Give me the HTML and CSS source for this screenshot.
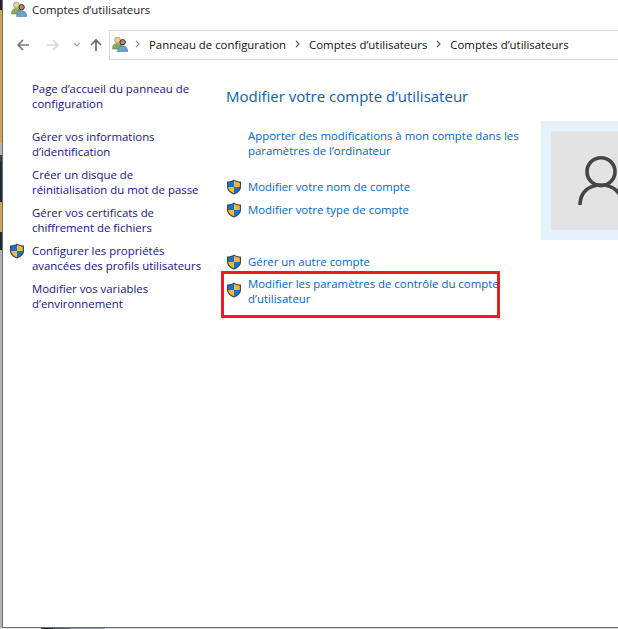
FILE: index.html
```html
<!DOCTYPE html>
<html lang="fr">
<head>
<meta charset="utf-8">
<title>Comptes d'utilisateurs</title>
<link rel="stylesheet" href="styles.css">
</head>
<body>
<svg class="defs" width="0" height="0" aria-hidden="true">
  <defs>
    <symbol id="shield" viewBox="0 0 16 16">
      <path d="M8 .4 C6 1.9 3.6 2.5 1 2.5 L1 8 C1 11.5 4.2 14 8 15.6 C11.8 14 15 11.5 15 8 L15 2.5 C12.4 2.5 10 1.9 8 .4Z" fill="#3d4650"/>
      <path d="M8 1.8 C6.2 3 4.2 3.6 2.2 3.7 L2.2 8 L8 8Z" fill="#1473d6"/>
      <path d="M8 1.8 C9.8 3 11.8 3.6 13.8 3.7 L13.8 8 L8 8Z" fill="#f7b733"/>
      <path d="M2.2 8 L8 8 L8 14.3 C5 13 2.3 11 2.2 8Z" fill="#f7b733"/>
      <path d="M13.8 8 L8 8 L8 14.3 C11 13 13.7 11 13.8 8Z" fill="#1473d6"/>
    </symbol>
    <symbol id="users" viewBox="0 0 16 16">
      <circle cx="5.4" cy="4" r="2.9" fill="#e8cfa0" stroke="#9aa36a" stroke-width=".8"/>
      <path d="M.6 12.5 C.6 8.6 2.6 7.4 5.4 7.4 C8 7.4 9.4 8.4 9.8 11 L8 13 L.6 13Z" fill="#8cab58" stroke="#6b8443" stroke-width=".6"/>
      <circle cx="10.6" cy="6.2" r="2.7" fill="#c08a5e" stroke="#3c2c22" stroke-width="1"/>
      <path d="M5.6 15.6 C5.6 11.6 7.6 9.8 10.6 9.8 C13.6 9.8 15.6 11.6 15.6 15.6Z" fill="#6ba3cf" stroke="#41729a" stroke-width=".6"/>
    </symbol>
  </defs>
</svg>
<div class="edge"></div>
<div class="window">
  <div class="titlebar">
    <svg class="icon-16"><use href="#users"/></svg>
    <span class="title">Comptes d’utilisateurs</span>
  </div>
  <div class="navbar">
    <div class="nav-buttons">
      <svg class="nav-arrow" viewBox="0 0 14 14"><path d="M14 7H3M8 2 3 7l5 5" fill="none" stroke="#7a7a7a" stroke-width="1.7"/></svg>
      <svg class="nav-arrow nav-forward" viewBox="0 0 14 14"><path d="M1 7h11M7 2l5 5-5 5" fill="none" stroke="#d6d6d6" stroke-width="1.7"/></svg>
      <svg class="nav-chevron" viewBox="0 0 8 5"><path d="M1 1l3 3 3-3" fill="none" stroke="#a8a8a8" stroke-width="1.1"/></svg>
      <svg class="nav-arrow nav-up" viewBox="0 0 14 14"><path d="M7 13V2M2 7l5-5 5 5" fill="none" stroke="#6a6a6a" stroke-width="1.7"/></svg>
    </div>
    <div class="address">
      <svg class="icon-16"><use href="#users"/></svg>
      <svg class="crumb-sep crumb-sep-first" viewBox="0 0 5 8"><path d="M1 1l3 3-3 3" fill="none" stroke="#8a8a8a" stroke-width="1.1"/></svg>
      <span>Panneau de configuration</span>
      <svg class="crumb-sep" viewBox="0 0 5 8"><path d="M1 1l3 3-3 3" fill="none" stroke="#555" stroke-width="1.1"/></svg>
      <span>Comptes d’utilisateurs</span>
      <svg class="crumb-sep" viewBox="0 0 5 8"><path d="M1 1l3 3-3 3" fill="none" stroke="#555" stroke-width="1.1"/></svg>
      <span>Comptes d’utilisateurs</span>
    </div>
  </div>
  <div class="content">
    <nav class="sidebar">
      <a class="side-link side-home">Page d’accueil du panneau de configuration</a>
      <a class="side-link">Gérer vos informations d’identification</a>
      <a class="side-link">Créer un disque de réinitialisation du mot de passe</a>
      <a class="side-link">Gérer vos certificats de chiffrement de fichiers</a>
      <a class="side-link side-shield"><svg class="shield"><use href="#shield"/></svg>Configurer les propriétés avancées des profils utilisateurs</a>
      <a class="side-link">Modifier vos variables d’environnement</a>
    </nav>
    <main class="main">
      <h1>Modifier votre compte d’utilisateur</h1>
      <div class="panel">
        <div class="tasks">
          <a class="task task-plain">Apporter des modifications à mon compte dans les paramètres de l’ordinateur</a>
          <a class="task task-name"><svg class="shield"><use href="#shield"/></svg>Modifier votre nom de compte</a>
          <a class="task task-type"><svg class="shield"><use href="#shield"/></svg>Modifier votre type de compte</a>
          <a class="task task-other"><svg class="shield"><use href="#shield"/></svg>Gérer un autre compte</a>
          <a class="task task-uac"><svg class="shield"><use href="#shield"/></svg>Modifier les paramètres de contrôle du compte d’utilisateur</a>
        </div>
        <div class="avatar-frame">
          <div class="avatar">
            <svg class="avatar-icon" viewBox="0 0 48 52"><circle cx="23" cy="16.7" r="14" fill="none" stroke="#454545" stroke-width="3.6"/><path d="M2 50C2 37 11 30 23 30s21 7 21 20" fill="none" stroke="#454545" stroke-width="3.6"/></svg>
          </div>
        </div>
      </div>
    </main>
  </div>
</div>
<div class="strip"></div>
</body>
</html>
```
FILE: styles.css
```css
html, body {
  margin: 0;
  padding: 0;
  width: 618px;
  height: 629px;
  overflow: hidden;
  background: #fff;
}
body {
  position: relative;
  font-family: "Open Sans", "Noto Sans", sans-serif;
  font-size: 11.4px;
  line-height: 15px;
  color: #1a1a1a;
}
.defs { position: absolute; }
.edge {
  position: absolute;
  left: 0;
  top: 0;
  width: 2px;
  height: 628px;
  background: linear-gradient(to bottom,
    #1f242c 0 10px,
    #d2a25f 10px 143px,
    #b5b5b5 143px 155px,
    #3a3f46 155px 162px,
    #1d2a38 162px 202px,
    #d2a25f 202px 232px,
    #1d2a38 232px 250px,
    #b4b4b4 250px 628px);
}
.window {
  box-sizing: border-box;
  height: 628px;
  margin-left: 2px;
  border-left: 1px solid #6e6e6e;
  border-bottom: 1px solid #6e6e6e;
  background: #fff;
}
.icon-16 { width: 16px; height: 16px; flex: none; }
.titlebar {
  display: flex;
  align-items: center;
  gap: 5px;
  height: 18px;
  padding-left: 8px;
}
.navbar {
  display: flex;
  align-items: center;
  height: 30px;
  margin-top: 12px;
}
.nav-buttons {
  display: flex;
  align-items: center;
  flex: none;
  width: 106px;
  padding-left: 12px;
  padding-bottom: 1px;
  box-sizing: border-box;
}
.nav-arrow { width: 14px; height: 14px; flex: none; }
.nav-forward { margin-left: 17px; }
.nav-chevron { width: 8px; height: 5px; flex: none; margin-left: 13px; }
.nav-up { margin-left: 8px; }
.address {
  flex: 1;
  display: flex;
  align-items: center;
  height: 30px;
  box-sizing: border-box;
  border: 1px solid #d9d9d9;
  border-right: 0;
  padding: 0 0 2px 2px;
  color: #111;
}
.crumb-sep { width: 5px; height: 8px; margin: 0 9px; flex: none; }
.crumb-sep-first { margin-left: 7px; margin-right: 9px; }
.content {
  display: flex;
  padding-top: 21px;
}
.sidebar {
  display: flex;
  flex-direction: column;
  gap: 8px;
  width: 194px;
  padding-left: 29px;
  flex: none;
}
.side-link {
  position: relative;
  display: block;
  color: #14148a;
  width: 172px;
}
.side-home { margin-bottom: 10px; }
.side-shield .shield { position: absolute; left: -23px; top: 0; }
.shield { width: 16px; height: 16px; flex: none; }
.main { flex: 1; padding-top: 5px; }
h1 {
  margin: 0;
  font-size: 15px;
  line-height: 20px;
  font-weight: 400;
  color: #0a5fb4;
}
.panel {
  display: flex;
  margin-top: 15px;
}
.tasks {
  width: 315px;
  flex: none;
  display: flex;
  flex-direction: column;
}
.task {
  position: relative;
  display: block;
  color: #0066cc;
  padding-left: 22px;
}
.task .shield { position: absolute; left: 0; top: 0; }
.task-plain { margin-top: 7px; }
.task-name { margin-top: 21px; }
.task-type { margin-top: 8px; }
.task-other { margin-top: 37px; }
.task-uac { margin-top: 7px; width: 255px; }
.task-uac .shield { top: 6px; }
.task-uac::before {
  content: "";
  position: absolute;
  left: -5px;
  top: -5px;
  box-sizing: border-box;
  width: 279px;
  height: 47px;
  border: 3px solid #ed1c24;
}
.avatar-frame {
  box-sizing: border-box;
  width: 77px;
  height: 119px;
  padding: 10px 0 10px 10px;
  background: #e5f1fb;
}
.avatar {
  height: 99px;
  background: #e3e3e3;
  overflow: hidden;
  padding: 24px 0 0 27px;
  box-sizing: border-box;
}
.avatar-icon { width: 48px; height: 52px; display: block; }
.strip {
  height: 1px;
  background: linear-gradient(to right,
    #e8e8e8 0 41px,
    #1e2530 41px 53px,
    #5b6066 53px 70px,
    #8f99ad 70px 105px,
    #d4d4d4 105px);
}
```
